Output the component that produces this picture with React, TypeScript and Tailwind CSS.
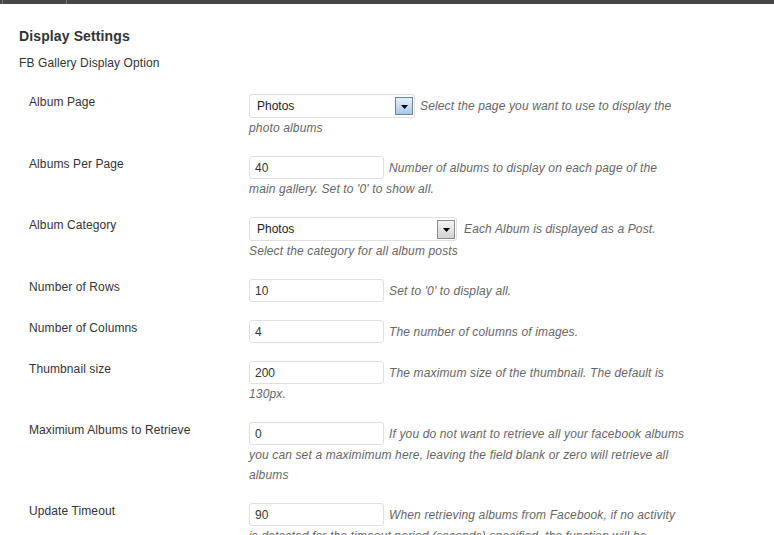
type Row = {
  label: string;
  kind: "select" | "input";
  value: string;
  desc: string;
  widthClass?: string;
  active?: boolean;
  gapClass?: string;
};

const rows: Row[] = [
  {
    label: "Album Page",
    kind: "select",
    value: "Photos",
    widthClass: "w-[166px]",
    active: true,
    desc: "Select the page you want to use to display the photo albums",
  },
  {
    label: "Albums Per Page",
    kind: "input",
    value: "40",
    desc: "Number of albums to display on each page of the main gallery. Set to '0' to show all.",
  },
  {
    label: "Album Category",
    kind: "select",
    value: "Photos",
    widthClass: "w-[208px]",
    gapClass: "pl-[7px]",
    desc: "Each Album is displayed as a Post. Select the category for all album posts",
  },
  { label: "Number of Rows", kind: "input", value: "10", desc: "Set to '0' to display all." },
  { label: "Number of Columns", kind: "input", value: "4", desc: "The number of columns of images." },
  {
    label: "Thumbnail size",
    kind: "input",
    value: "200",
    desc: "The maximum size of the thumbnail. The default is 130px.",
  },
  {
    label: "Maximium Albums to Retrieve",
    kind: "input",
    value: "0",
    desc: "If you do not want to retrieve all your facebook albums you can set a maximimum here, leaving the field blank or zero will retrieve all albums",
  },
  {
    label: "Update Timeout",
    kind: "input",
    value: "90",
    desc: "When retrieving albums from Facebook, if no activity is detected for the timeout period (seconds) specified, the function will be stopped.",
  },
];

function Arrow({ active }: { active?: boolean }) {
  return (
    <span
      className={
        active
          ? "mr-[1px] flex h-[18px] w-[18px] items-center justify-center border border-[#6f8497] bg-gradient-to-b from-[#e6f0f9] to-[#a9c9e6]"
          : "mr-[1px] flex h-[19px] w-[18px] items-center justify-center border border-[#8d8d8d] bg-gradient-to-b from-[#f4f4f4] to-[#d2d2d2]"
      }
    >
      <svg width="7" height="4" viewBox="0 0 7 4" className="mt-[1px]">
        <polygon points="0,0 7,0 3.5,4" fill="#000" />
      </svg>
    </span>
  );
}

function SelectBox({ value, widthClass, active }: { value: string; widthClass?: string; active?: boolean }) {
  return (
    <span
      className={`inline-flex h-[24px] items-center justify-between rounded-[3px] border border-[#dfdfdf] bg-white pl-[7px] align-baseline text-[#222] ${widthClass}`}
    >
      <span>{value}</span>
      <Arrow active={active} />
    </span>
  );
}

export default function App() {
  return (
    <div className="h-[535px] w-[774px] overflow-hidden bg-white font-['Liberation_Sans',Arial,sans-serif] text-[12px] text-[#333]">
      <div className="flex h-[4px] bg-[#464646]">
        <span className="ml-[2px] h-full w-[1px] bg-[#7a7a7a]" />
        <span className="ml-[63px] h-full w-[1px] bg-[#7a7a7a]" />
      </div>

      <div className="pl-[19px]">
        <h3 className="mt-[22px] text-[14px] font-bold leading-[20px] tracking-[0.12px] text-[#333]">
          Display Settings
        </h3>
        <p className="mt-[7px] leading-[20px] tracking-[0.1px]">FB Gallery Display Option</p>

        <div className="mt-[13px]">
          {rows.map((row) => (
            <div className="flex items-start" key={row.label}>
              <div className="w-[220px] shrink-0 px-[10px] pt-[8px] leading-[16px] tracking-[0.1px] text-[#333]">
                {row.label}
              </div>
              <div className="w-[447px] pb-[10px] pl-[10px] pt-[8px] leading-[20px]">
                {row.kind === "select" ? (
                  <SelectBox value={row.value} widthClass={row.widthClass} active={row.active} />
                ) : (
                  <input
                    readOnly
                    value={row.value}
                    className="h-[23px] w-[135px] rounded-[3px] border border-[#dfdfdf] bg-white px-[5px] py-0 align-baseline text-[#333] outline-none"
                  />
                )}
                <span className={`${row.gapClass ?? "pl-[5px]"} italic tracking-[0.14px] text-[#666]`}>{row.desc}</span>
              </div>
            </div>
          ))}
        </div>
      </div>
    </div>
  );
}
